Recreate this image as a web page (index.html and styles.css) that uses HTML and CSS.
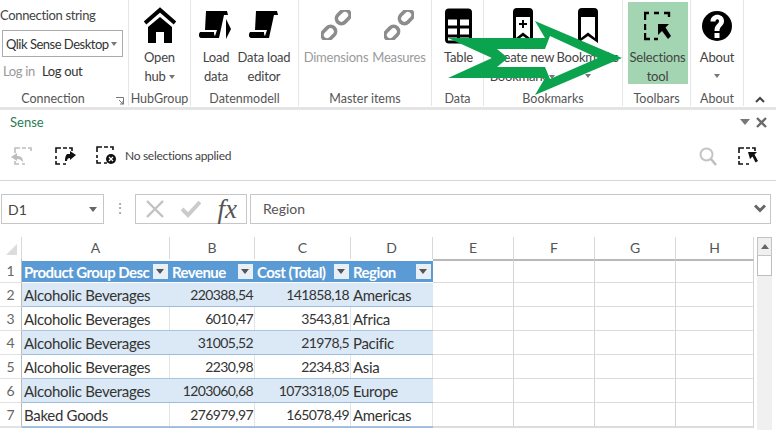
FILE: index.html
```html
<!DOCTYPE html>
<html lang="en">
<head>
<meta charset="utf-8">
<title>Qlik Sense for Excel</title>
<link rel="stylesheet" href="styles.css">
</head>
<body>
<svg class="defs" width="0" height="0">
  <symbol id="script" viewBox="0 0 30 30">
    <path d="M7 1H28L29 5H25L20 28H2C0 28 -1 25 1 22H15C15 22 15 25 16 26L18 20H6Z" fill="#000"/>
  </symbol>
  <symbol id="link" viewBox="0 0 30 30">
    <g fill="none" stroke="#8c8c8c" stroke-width="3.6">
      <rect x="-5" y="-12" width="10" height="15" rx="5" transform="translate(19 10) rotate(45)"/>
      <rect x="-5" y="-3" width="10" height="15" rx="5" transform="translate(11 20) rotate(45)"/>
    </g>
  </symbol>
  <symbol id="bookmark" viewBox="0 0 20 36">
    <path d="M0 4Q0 0 4 0H16Q20 0 20 4V35L10 28L0 35Z" fill="#000"/>
    <path d="M3 9H17V30L10 24.500L3 30Z" fill="#fff"/>
  </symbol>
  <symbol id="dash" viewBox="0 0 18 18">
    <path d="M1 6V1H6M8 1H12M14 1H17V4M1 9V12M1 14V17H5M8 17H11" fill="none" stroke="currentColor" stroke-width="1.600"/>
  </symbol>
</svg>

<header class="ribbon">
  <section class="group g-conn">
    <div class="conn">
      <div class="conn-label">Connection string</div>
      <div class="select"><span>Qlik Sense Desktop</span><i class="caret"></i></div>
      <div class="login"><span class="off">Log in</span><span>Log out</span></div>
    </div>
    <div class="glabel glabel-launch">Connection
      <svg class="launcher" width="8" height="8" viewBox="0 0 8 8"><path d="M0 .5H7.500V7.500M3 3L7 7M7 4V7H4" fill="none" stroke="#777"/></svg>
    </div>
  </section>
  <section class="group g-hub">
    <div class="gbody">
      <div class="btn">
        <svg class="ico" width="32" height="36" viewBox="0 0 32 36"><path d="M1 15L16 2L31 15" fill="none" stroke="#000" stroke-width="4"/><path d="M16 9L28 19V35H20V24H12V35H4V19Z" fill="#000"/></svg>
        <span>Open</span><span>hub<i class="caret inl"></i></span>
      </div>
    </div>
    <div class="glabel">HubGroup</div>
  </section>
  <section class="group g-data">
    <div class="gbody">
      <div class="btn w-load">
        <svg class="ico" width="34" height="32" viewBox="0 0 34 32"><use href="#script" width="30" height="30"/><path d="M27 9L32 19L27 29Z" fill="#000"/></svg>
        <span>Load</span><span>data</span>
      </div>
      <div class="btn w-editor">
        <svg class="ico" width="30" height="32" viewBox="0 0 30 32"><use href="#script" width="30" height="30"/></svg>
        <span>Data load</span><span>editor</span>
      </div>
    </div>
    <div class="glabel">Datenmodell</div>
  </section>
  <section class="group g-master">
    <div class="gbody off">
      <div class="btn w-dim">
        <svg class="ico" width="30" height="32" viewBox="0 0 30 32"><use href="#link" width="30" height="30"/></svg>
        <span>Dimensions</span>
      </div>
      <div class="btn w-mea">
        <svg class="ico" width="30" height="32" viewBox="0 0 30 32"><use href="#link" width="30" height="30"/></svg>
        <span>Measures</span>
      </div>
    </div>
    <div class="glabel">Master items</div>
  </section>
  <section class="group g-table">
    <div class="gbody">
      <div class="btn">
        <svg class="ico" width="27" height="35" viewBox="0 0 27 35"><rect width="27" height="35" rx="4" fill="#000"/><path d="M3 11H12V17H3ZM15 11H24V17H15ZM3 20H12V26H3ZM15 20H24V26H15ZM3 29H12V32H3ZM15 29H24V32H15Z" fill="#fff"/></svg>
        <span>Table</span>
      </div>
    </div>
    <div class="glabel">Data</div>
  </section>
  <section class="group g-book">
    <div class="gbody">
      <div class="btn w-book">
        <svg class="ico" width="20" height="36" viewBox="0 0 20 36"><use href="#bookmark" width="20" height="36"/><path d="M9 12H11V15H14V17H11V20H9V17H6V15H9Z" fill="#000"/></svg>
        <span>Create new</span><span>Bookmark<i class="caret inl"></i></span>
      </div>
      <div class="btn w-book">
        <svg class="ico" width="20" height="36" viewBox="0 0 20 36"><use href="#bookmark" width="20" height="36"/></svg>
        <span>Bookmarks</span><span><i class="caret"></i></span>
      </div>
    </div>
    <div class="glabel">Bookmarks</div>
  </section>
  <section class="group g-tools">
    <div class="gbody">
      <div class="btn active">
        <svg class="ico" width="27" height="28" viewBox="0 0 27 28"><path d="M1 8V1H5M10 1H15M20 1H25V5M1 12V18M1 21V27H6M10 27H14" fill="none" stroke="#000" stroke-width="2.400"/><path d="M14 12H25L21.500 15.500L27 24L24 27L18 19L14 23Z" fill="#000"/></svg>
        <span>Selections</span><span>tool</span>
      </div>
    </div>
    <div class="glabel">Toolbars</div>
  </section>
  <section class="group g-about">
    <div class="gbody">
      <div class="btn">
        <svg class="ico" width="30" height="34" viewBox="0 0 30 34"><circle cx="15" cy="17" r="15" fill="#000"/><path d="M8.500 12.500C8.500 3.500 22 3.500 22 12C22 17 17.500 17 17.500 22H12.500C12.500 15 17 15.500 17 12C17 9.500 13.500 9.500 13.500 12.500ZM12.500 24H17.500V29H12.500Z" fill="#fff"/></svg>
        <span>About</span><span><i class="caret"></i></span>
      </div>
    </div>
    <div class="glabel">About</div>
  </section>
  <div class="collapse">
    <svg width="10" height="7" viewBox="0 0 10 7"><path d="M1 6L5 2L9 6" fill="none" stroke="#444" stroke-width="2"/></svg>
  </div>
</header>

<svg class="callout" width="776" height="110" viewBox="0 0 776 110">
  <path fill-rule="evenodd" fill="#0ca34e" d="M448 38H545L535 21L622 58L535 95L545 78H448L492 58ZM497 49L508 58L497 67H545L550 79L598 58L550 36L545 49Z"/>
</svg>

<section class="pane">
  <div class="pane-head">
    <span class="pane-title">Sense</span>
    <div class="pane-ctl">
      <i class="pane-tri"></i>
      <svg width="11" height="11" viewBox="0 0 11 11"><path d="M1 1L10 10M10 1L1 10" stroke="#6b6b6b" stroke-width="2.400"/></svg>
    </div>
  </div>
  <div class="pane-tools">
    <svg class="t-back" width="22" height="18" viewBox="0 0 22 18"><use href="#dash" x="3" width="18" height="18"/><path d="M0 10L6 6V9C10 9 12 11 12 15C10 13 9 12 6 12V14Z" fill="#bdbdbd"/></svg>
    <svg class="t-fwd" width="22" height="18" viewBox="0 0 22 18"><use href="#dash" width="18" height="18"/><path d="M21 8L15 4V7H12C10 9 10 12 10 14H12C12 12 13 11 15 11V13Z" fill="#111"/></svg>
    <svg class="t-clr" width="22" height="20" viewBox="0 0 22 20"><use href="#dash" width="18" height="18"/><circle cx="15" cy="13" r="5" fill="#111"/><path d="M13 11L17 15M17 11L13 15" stroke="#fff" stroke-width="1.300"/></svg>
    <span class="status">No selections applied</span>
    <div class="tools-right">
      <svg width="18" height="19" viewBox="0 0 18 19"><circle cx="7.500" cy="7.500" r="6" fill="none" stroke="#c4c4c4" stroke-width="2"/><path d="M12 12L17 18" stroke="#bdbdbd" stroke-width="2.500"/></svg>
      <svg width="20" height="18" viewBox="0 0 20 18"><use href="#dash" width="18" height="18"/><path d="M10 5H19L16.500 7.500L20 14L17.500 15.500L14.500 9.500L12 12Z" fill="#111"/></svg>
    </div>
  </div>
</section>

<section class="fbar">
  <div class="namebox"><span>D1</span><i class="caret dark"></i></div>
  <div class="fdots">⋮</div>
  <div class="fbtns">
    <svg width="20" height="20" viewBox="0 0 20 20"><path d="M2 2L18 18M18 2L2 18" stroke="#c2c2c2" stroke-width="2.400"/></svg>
    <svg width="20" height="18" viewBox="0 0 20 18"><path d="M1 9L7 15L19 2" fill="none" stroke="#cbcbcb" stroke-width="4"/></svg>
    <span class="fx">fx</span>
  </div>
  <div class="finput"><span>Region</span>
    <svg width="12" height="9" viewBox="0 0 12 9"><path d="M1 1.500L6 6.500L11 1.500" fill="none" stroke="#666" stroke-width="3"/></svg>
  </div>
</section>

<section class="sheet">
  <div class="grid">
    <div class="ch corner"><i class="corner-tri"></i></div>
    <div class="ch">A</div><div class="ch">B</div><div class="ch">C</div><div class="ch">D</div>
    <div class="ch">E</div><div class="ch">F</div><div class="ch">G</div><div class="ch">H</div>

    <div class="rh">1</div>
    <div class="c th"><span>Product Group Desc</span><i class="filter"></i></div>
    <div class="c th"><span>Revenue</span><i class="filter"></i></div>
    <div class="c th"><span>Cost (Total)</span><i class="filter"></i></div>
    <div class="c th"><span>Region</span><i class="filter"></i></div>
    <div class="c e top"></div><div class="c e top"></div><div class="c e top"></div><div class="c e top"></div>

    <div class="rh">2</div>
    <div class="c band">Alcoholic Beverages</div><div class="c band num">220388,54</div><div class="c band num">141858,18</div><div class="c band">Americas</div>
    <div class="c e"></div><div class="c e"></div><div class="c e"></div><div class="c e"></div>

    <div class="rh">3</div>
    <div class="c">Alcoholic Beverages</div><div class="c num">6010,47</div><div class="c num">3543,81</div><div class="c">Africa</div>
    <div class="c e"></div><div class="c e"></div><div class="c e"></div><div class="c e"></div>

    <div class="rh">4</div>
    <div class="c band">Alcoholic Beverages</div><div class="c band num">31005,52</div><div class="c band num">21978,5</div><div class="c band">Pacific</div>
    <div class="c e"></div><div class="c e"></div><div class="c e"></div><div class="c e"></div>

    <div class="rh">5</div>
    <div class="c">Alcoholic Beverages</div><div class="c num">2230,98</div><div class="c num">2234,83</div><div class="c">Asia</div>
    <div class="c e"></div><div class="c e"></div><div class="c e"></div><div class="c e"></div>

    <div class="rh">6</div>
    <div class="c band">Alcoholic Beverages</div><div class="c band num">1203060,68</div><div class="c band num">1073318,05</div><div class="c band">Europe</div>
    <div class="c e"></div><div class="c e"></div><div class="c e"></div><div class="c e"></div>

    <div class="rh">7</div>
    <div class="c">Baked Goods</div><div class="c num">276979,97</div><div class="c num">165078,49</div><div class="c">Americas</div>
    <div class="c e"></div><div class="c e"></div><div class="c e"></div><div class="c e"></div>

    <div class="rh"></div>
    <div class="c band"></div><div class="c band"></div><div class="c band"></div><div class="c band"></div>
    <div class="c e"></div><div class="c e"></div><div class="c e"></div><div class="c e"></div>
  </div>
  <div class="vscroll">
    <div class="sb-up"><i></i></div>
    <div class="sb-thumb"></div>
  </div>
</section>
</body>
</html>
```

FILE: styles.css
```css
* { box-sizing: border-box; }
html, body { margin: 0; padding: 0; }
body {
  position: relative;
  width: 776px;
  height: 430px;
  overflow: hidden;
  background: #fff;
  font-family: "Lato", "Open Sans", sans-serif;
  font-size: 14px;
  color: #444;
}
i { display: block; font-style: normal; }
.defs { position: absolute; }

/* ribbon */
.ribbon {
  display: flex;
  height: 110px;
  border-bottom: 3px solid #e4e4e4;
}
.group {
  display: flex;
  flex-direction: column;
  flex: none;
  border-right: 1px solid #e6e6e6;
  margin-bottom: 1px;
}
.g-conn { width: 129px; }
.g-hub { width: 62px; }
.g-data { width: 108px; }
.g-master { width: 133px; }
.g-table { width: 52px; }
.g-book { width: 139px; }
.g-tools { width: 68px; }
.g-about { width: 53px; }
.gbody {
  flex: 1;
  display: flex;
  justify-content: center;
  padding-top: 2px;
  min-height: 0;
}
.g-data .gbody { justify-content: flex-start; }
.g-table .gbody { padding-left: 2px; }
.g-book .gbody { padding-left: 4px; }
.g-tools .gbody { padding-left: 2px; }
.glabel {
  height: 18px;
  line-height: 21px;
  text-align: center;
  font-size: 12.500px;
  color: #555;
  white-space: nowrap;
}
.glabel-launch { position: relative; padding-right: 22px; }
.launcher { position: absolute; right: 4px; top: 9px; }
.btn {
  display: flex;
  flex-direction: column;
  align-items: center;
  width: 60px;
  height: 82px;
  line-height: 19px;
  font-size: 13px;
  letter-spacing: -.2px;
  white-space: nowrap;
}
.btn > span { height: 19px; display: flex; align-items: center; gap: 3px; }
.btn .ico { height: 38px; margin: 5px 0 3px; flex: none; }
.w-load { width: 50px; }
.w-editor { width: 46px; }
.w-dim { width: 68px; }
.w-mea { width: 58px; }
.w-book { width: 65px; }
.active { background: #a3d5b2; width: 60px; }
.off { color: #a0a0a0; }
.gbody.off { color: #9a9a9a; }
.caret {
  width: 0;
  height: 0;
  border: 3px solid transparent;
  border-top: 4px solid #777;
  border-bottom: 0;
}
.caret.dark { border-top-color: #666; border-width: 4px; border-top-width: 5px; border-bottom: 0; }
.conn { flex: 1; padding: 6px 0 0 0; font-size: 13px; letter-spacing: -.35px; }
.conn-label { line-height: 19px; white-space: nowrap; }
.select {
  display: flex;
  align-items: center;
  justify-content: space-between;
  width: 121px;
  height: 27px;
  margin: 5px 0 5px 2px;
  padding: 0 5px 0 3px;
  border: 1px solid #ababab;
  color: #333;
  letter-spacing: -.5px;
  white-space: nowrap;
}
.login { display: flex; gap: 7px; padding-left: 3px; line-height: 19px; color: #333; }
.login .off { color: #999; }
.collapse { flex: 1; display: flex; align-items: flex-end; justify-content: center; padding-bottom: 4px; }

/* arrow annotation laid over the ribbon */
.callout { position: absolute; left: 0; top: 0; pointer-events: none; }

/* task pane */
.pane { height: 71px; border-bottom: 1px solid #d6d6d6; }
.pane-head {
  display: flex;
  align-items: center;
  justify-content: space-between;
  height: 24px;
  padding: 0 9px 0 10px;
}
.pane-title { font-size: 13px; color: #2c7c55; }
.pane-ctl { display: flex; align-items: center; gap: 6px; }
.pane-tri { width: 0; height: 0; border: 5px solid transparent; border-top: 6px solid #777; border-bottom: 0; }
.pane-tools {
  display: flex;
  align-items: center;
  height: 30px;
  margin-top: 7px;
  padding: 0 18px 0 11px;
}
.t-back { color: #bdbdbd; }
.t-fwd { margin-left: 22px; color: #111; }
.t-clr { margin-left: 19px; color: #111; }
.status { margin-left: 7px; font-size: 12px; letter-spacing: -.3px; color: #444; margin-top: -2px; }
.tools-right { margin-left: auto; display: flex; align-items: center; gap: 21px; color: #111; }

/* formula bar */
.fbar {
  display: flex;
  align-items: stretch;
  height: 30px;
  margin: 13px 5px 13px 1px;
}
.namebox {
  display: flex;
  align-items: center;
  justify-content: space-between;
  width: 103px;
  padding: 0 6px;
  border: 1px solid #c6c6c6;
  color: #444;
}
.fdots { width: 31px; text-align: center; line-height: 28px; color: #999; }
.fbtns {
  display: flex;
  align-items: center;
  justify-content: space-between;
  width: 112px;
  padding: 0 9px 0 9px;
  border: 1px solid #c6c6c6;
}
.fx { font-family: "Liberation Serif", serif; font-style: italic; font-size: 27px; color: #555; }
.finput {
  flex: 1;
  display: flex;
  align-items: center;
  justify-content: space-between;
  margin-left: 3px;
  padding: 0 4px 2px 12px;
  border: 1px solid #c6c6c6;
  color: #555;
}

/* sheet */
.sheet { display: flex; align-items: flex-start; }
.grid {
  display: grid;
  grid-template-columns: 22px 148px 85px 96px 82px 81px 81px 81px 78px;
  grid-template-rows: 22px repeat(7, 24px);
  font-size: 15px;
  letter-spacing: -.3px;
}
.ch {
  display: flex;
  align-items: center;
  justify-content: center;
  padding-bottom: 2px;
  border-right: 1px solid #d8d8d8;
  font-size: 14px;
  letter-spacing: 0;
  color: #555;
}
.corner { position: relative; }
.corner-tri {
  position: absolute;
  right: 4px;
  bottom: 4px;
  border-left: 11px solid transparent;
  border-bottom: 11px solid #dcdcdc;
}
.rh {
  display: flex;
  align-items: center;
  justify-content: center;
  border-right: 1px solid #bbb;
  border-bottom: 1px solid #e2e2e2;
  font-size: 14px;
  letter-spacing: 0;
  color: #666;
}
.c {
  display: flex;
  align-items: center;
  min-width: 0;
  padding: 0 2px;
  border-bottom: 1px solid #a9c3e0;
  color: #333;
  white-space: nowrap;
  overflow: hidden;
}
.c:not(.th):not(.e):not(.band) { box-shadow: inset -1px 0 0 #e4e4e4; }
.band { background: #dbe8f5; border-bottom-color: #9dbbdc; }
.num { justify-content: flex-end; font-size: 14px; letter-spacing: -.6px; }
.th {
  justify-content: space-between;
  background: #5b9bd5;
  color: #fff;
  font-weight: 700;
  letter-spacing: -.55px;
  border-top: 2px solid #fff;
  border-bottom: 1px solid #fff;
}
.filter {
  position: relative;
  flex: none;
  width: 15px;
  height: 15px;
  background: #e9eff6;
}
.filter::after {
  content: "";
  position: absolute;
  left: 3px;
  top: 5px;
  border: 4px solid transparent;
  border-top: 5px solid #555;
  border-bottom: 0;
}
.e { border-bottom: 1px solid #dcdcdc; border-right: 1px solid #d4d4d4; }
.top { border-top: 2px solid #b9b9b9; }
.vscroll {
  display: flex;
  flex-direction: column;
  width: 15px;
  height: 193px;
  margin-left: 3px;
  background: #f0f0f0;
}
.sb-up {
  display: flex;
  align-items: center;
  justify-content: center;
  height: 19px;
  border: 1px solid #c4c4c4;
}
.sb-up i { border: 4px solid transparent; border-bottom: 5px solid #666; border-top: 0; }
.sb-thumb { height: 20px; background: #fff; border: 1px solid #bdbdbd; border-top: 0; }
```
